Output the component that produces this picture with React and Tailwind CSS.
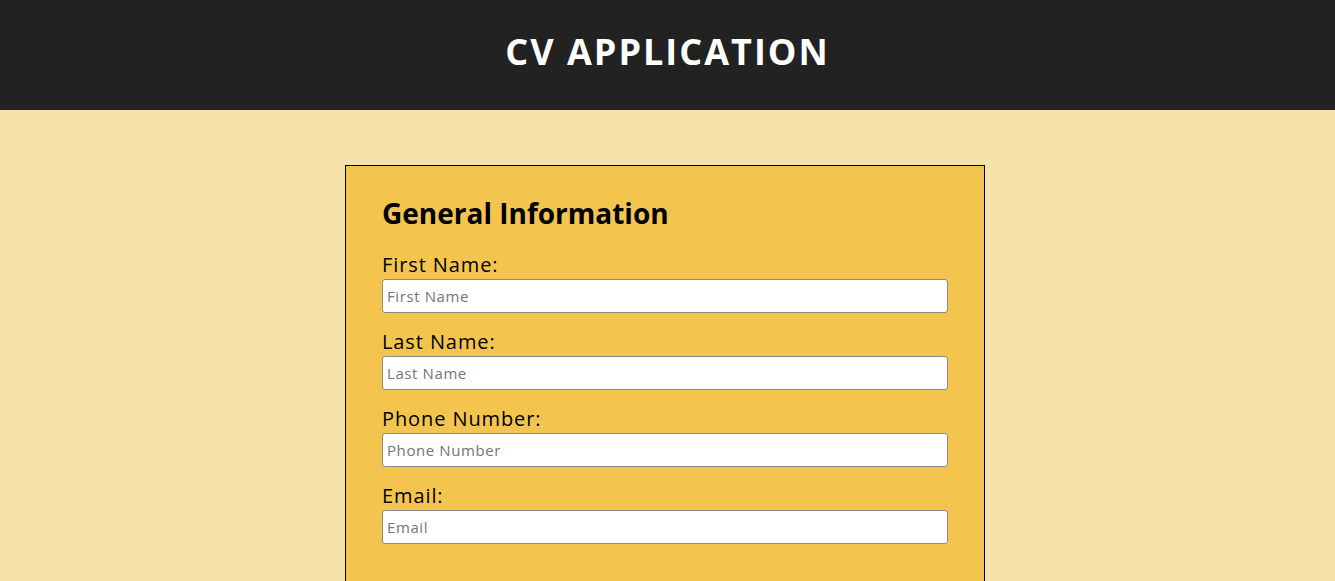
export default function App() {
  const fields = [
    { label: 'First Name:', placeholder: 'First Name' },
    { label: 'Last Name:', placeholder: 'Last Name' },
    { label: 'Phone Number:', placeholder: 'Phone Number' },
    { label: 'Email:', placeholder: 'Email' },
  ];

  return (
    <div className="min-h-screen bg-[#f7e2a9] font-['Open_Sans',sans-serif]">
      <header className="h-[110px] bg-[#222222] flex items-center justify-center pb-[6px]">
        <h1 className="text-[36px] font-bold text-white leading-none tracking-[2px]">CV APPLICATION</h1>
      </header>

      <main className="flex justify-center pt-[55px]">
        <section className="w-[640px] mr-[5px] bg-[#f4c54e] border border-black px-[36px] pt-[30px] pb-[60px]">
          <h2 className="text-[28px] font-bold text-black leading-[34px] mb-[23px]">
            General Information
          </h2>
          <div className="flex flex-col gap-[17px]">
            {fields.map((f) => (
              <label key={f.label} className="flex flex-col gap-[2px]">
                <span className="text-[20px] leading-[24px] text-black tracking-[0.9px]">{f.label}</span>
                <input
                  type="text"
                  placeholder={f.placeholder}
                  className="h-[34px] bg-white border border-[#8a8a8a] rounded-[3px] px-[4px] text-[15px] tracking-[0.6px] placeholder:text-[#78727c] outline-none"
                />
              </label>
            ))}
          </div>
        </section>
      </main>
    </div>
  );
}
